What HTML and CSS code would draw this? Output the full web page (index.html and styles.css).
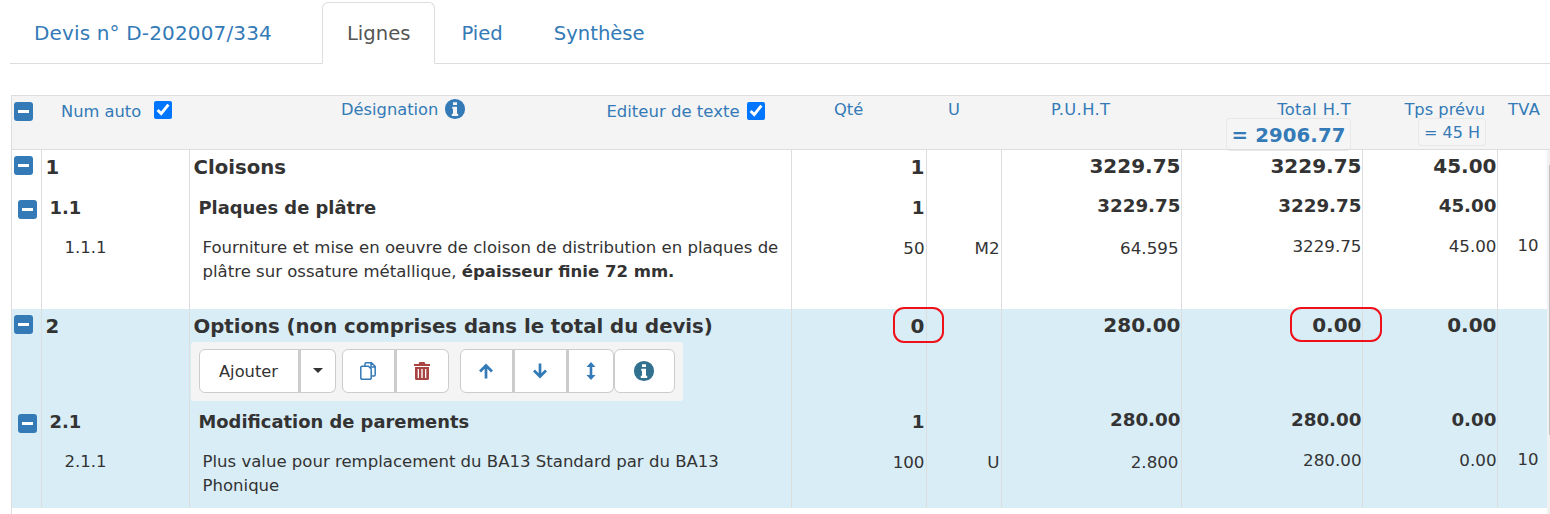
FILE: index.html
```html
<!DOCTYPE html>
<html lang="fr">
<head>
  <meta charset="UTF-8" />
  <title>Devis D-202007/334</title>
  <link rel="stylesheet" href="styles.css">
</head>
<body>
  <div class="container">
    <ul class="tabs">
      <li class="tab tab-title"><a href="#">Devis n° D-202007/334</a></li>
      <li class="tab active"><a href="#">Lignes</a></li>
      <li class="tab"><a href="#">Pied</a></li>
      <li class="tab"><a href="#">Synthèse</a></li>
    </ul>

    <div class="table-wrap">
      <table class="lines">
        <colgroup>
          <col class="c-toggle"><col class="c-num"><col class="c-des"><col class="c-qty"><col class="c-unit">
          <col class="c-pu"><col class="c-total"><col class="c-time"><col class="c-tva">
        </colgroup>
        <thead>
          <tr>
            <th colspan="2">
              <div class="head-num">
                <span class="toggle"></span>
                <label class="head-label">Num auto</label>
                <input type="checkbox" checked>
              </div>
            </th>
            <th>
              <div class="head-des">
                <span class="des-title">Désignation</span>
                <svg class="icon-info" viewBox="0 0 24 24"><use href="#info"/></svg>
                <label class="head-label editor">Editeur de texte</label>
                <input type="checkbox" checked>
              </div>
            </th>
            <th class="th-qty">Qté</th>
            <th class="th-unit">U</th>
            <th class="th-pu">P.U.H.T</th>
            <th class="th-total">Total H.T<span class="sum sum-big">= 2906.77</span></th>
            <th class="th-time">Tps prévu<span class="sum">= 45 H</span></th>
            <th class="th-tva">TVA</th>
          </tr>
        </thead>
        <tbody>
          <tr class="row-1">
            <td class="cell-toggle"><span class="toggle"></span></td>
            <td class="num">1</td>
            <td class="des">Cloisons</td>
            <td class="r qty">1</td>
            <td></td>
            <td class="r">3229.75</td>
            <td class="r">3229.75</td>
            <td class="r">45.00</td>
            <td></td>
          </tr>
          <tr class="row-2">
            <td class="cell-toggle"><span class="toggle"></span></td>
            <td class="num">1.1</td>
            <td class="des">Plaques de plâtre</td>
            <td class="r qty">1</td>
            <td></td>
            <td class="r">3229.75</td>
            <td class="r">3229.75</td>
            <td class="r">45.00</td>
            <td></td>
          </tr>
          <tr class="row-3 tall">
            <td></td>
            <td class="num">1.1.1</td>
            <td class="des">Fourniture et mise en oeuvre de cloison de distribution en plaques de plâtre sur ossature métallique, <b>épaisseur finie 72 mm.</b></td>
            <td class="r qty">50</td>
            <td class="r qty">M2</td>
            <td class="r qty pu">64.595</td>
            <td class="r">3229.75</td>
            <td class="r">45.00</td>
            <td class="tva">10</td>
          </tr>
          <tr class="row-1 info opt">
            <td class="cell-toggle"><span class="toggle"></span></td>
            <td class="num">2</td>
            <td class="des">
              Options (non comprises dans le total du devis)
              <div class="toolbar">
                <div class="btn-group">
                  <button class="btn btn-add">Ajouter</button>
                  <button class="btn btn-caret"><span class="caret"></span></button>
                </div>
                <div class="btn-group">
                  <button class="btn btn-icon"><svg viewBox="0 0 16 18"><path d="M5 4V2a1.200 1.200 0 0 1 1.200-1.200h5.300l3.700 3.700v8.300a1.200 1.200 0 0 1-1.200 1.200H11M11 1v4h4M2 4.300h6.500l2.700 2.700v9a1.200 1.200 0 0 1-1.200 1.200H2A1.200 1.200 0 0 1 .8 16V5.500A1.200 1.200 0 0 1 2 4.300z" fill="none" stroke="#337ab7" stroke-width="1.500"/></svg></button>
                  <button class="btn btn-icon btn-trash"><svg viewBox="0 0 16 18"><path fill="#a94442" d="M5.500 0h5l1 2H16v2H0V2h4.500zM1 5h14v11.500a1.500 1.500 0 0 1-1.500 1.500H2.500A1.500 1.500 0 0 1 1 16.500zm2.700 2v9h1.300V7zm3.600 0v9h1.400V7zm3.700 0v9h1.300V7z"/></svg></button>
                </div>
                <div class="btn-group gap">
                  <button class="btn btn-icon"><svg viewBox="0 0 16 16"><path fill="none" stroke="#337ab7" stroke-width="2.700" d="M8 15.500V2.500M2 8.500l6-6 6 6"/></svg></button>
                  <button class="btn btn-icon btn-trash"><svg viewBox="0 0 16 16"><path fill="none" stroke="#337ab7" stroke-width="2.700" d="M8 .5v13M2 7.500l6 6 6-6"/></svg></button>
                  <button class="btn btn-icon btn-move"><svg viewBox="0 0 10 18"><path fill="#337ab7" d="M5 0l4.500 5H6.300v8h3.200L5 18 .5 13h3.200V5H.5z"/></svg></button>
                </div>
                <button class="btn btn-help"><svg class="icon-info dark" viewBox="0 0 24 24"><use href="#info"/></svg></button>
              </div>
            </td>
            <td class="r qty mark-cell">0<span class="mark mark-qty"></span></td>
            <td></td>
            <td class="r">280.00</td>
            <td class="r mark-cell">0.00<span class="mark mark-total"></span></td>
            <td class="r">0.00</td>
            <td></td>
          </tr>
          <tr class="row-2 info">
            <td class="cell-toggle"><span class="toggle"></span></td>
            <td class="num">2.1</td>
            <td class="des">Modification de parements</td>
            <td class="r qty">1</td>
            <td></td>
            <td class="r">280.00</td>
            <td class="r">280.00</td>
            <td class="r">0.00</td>
            <td></td>
          </tr>
          <tr class="row-3 info last">
            <td></td>
            <td class="num">2.1.1</td>
            <td class="des">Plus value pour remplacement du BA13 Standard par du BA13 Phonique</td>
            <td class="r qty">100</td>
            <td class="r qty">U</td>
            <td class="r qty pu">2.800</td>
            <td class="r">280.00</td>
            <td class="r">0.00</td>
            <td class="tva">10</td>
          </tr>
        </tbody>
      </table>
    </div>
  </div>

  <div class="scroll-track"><div class="scroll-thumb"></div></div>

  <svg class="defs" width="0" height="0">
    <symbol id="info" viewBox="0 0 24 24">
      <path fill="currentColor" fill-rule="evenodd" d="M12 1a11 11 0 1 0 0 22 11 11 0 0 0 0-22zM9.800 4.500h4.400v3.200H9.800zM9 9.500h5.200v7.800h1.300v2.200h-7v-2.200h1.300v-5.600H9z"/>
    </symbol>
  </svg>
</body>
</html>
```

FILE: styles.css
```css
* { box-sizing: border-box; }
html, body {
  height: 100%;
  overflow: hidden;
}
body {
  font-family: 'DejaVu Sans', sans-serif;
  font-size: 16.3px;
  color: #333;
  background: white;
  margin: 0;
  padding: 0;
}
.container {
  padding: 2px 0 0 10px;
}
.defs {
  position: absolute;
}

/* tabs */
.tabs {
  display: flex;
  list-style: none;
  margin: 0 0 31px;
  padding: 0;
  height: 62px;
  border-bottom: 1px solid #ddd;
}
.tab {
  margin-right: 2px;
}
.tab a {
  display: block;
  height: 62px;
  padding: 19px 23.5px 0;
  font-size: 19.6px;
  line-height: 24px;
  color: #337ab7;
  text-decoration: none;
  border: 1px solid transparent;
  border-radius: 6px 6px 0 0;
}
.tab-title {
  margin-right: 25px;
}
.tab-title a {
  padding: 18px 24.5px 0 23px;
  font-size: 20px;
  letter-spacing: .15px;
}
.tab.active a {
  color: #555;
  background: white;
  border-color: #ddd #ddd white;
}

/* table */
.table-wrap {
  height: 419px;
  margin-left: 1px;
  border-left: 1px solid #ddd;
}
.lines {
  width: 1538px;
  table-layout: fixed;
  border-collapse: collapse;
}
.c-toggle { width: 29px; }
.c-num { width: 148px; }
.c-des { width: 602px; }
.c-qty { width: 135px; }
.c-unit { width: 75px; }
.c-pu { width: 180px; }
.c-total { width: 181px; }
.c-time { width: 135px; }
.c-tva { width: 53px; }

thead th {
  height: 54px;
  padding: 4px 0 0;
  background: #f4f4f4;
  border-top: 1px solid #ddd;
  border-bottom: 1px solid #ddd;
  color: #337ab7;
  font-size: 16.3px;
  font-weight: normal;
  line-height: 18px;
  text-align: left;
  vertical-align: top;
}
.head-num, .head-des {
  display: flex;
  align-items: center;
}
.head-num {
  padding: 2px 0 0 2px;
}
.head-num .head-label {
  margin-left: 28px;
}
.head-num input {
  margin: 0 0 0 13px;
  position: relative;
  top: -2px;
}
.head-des {
  padding-left: 152px;
}
.des-title {
  margin-top: -2px;
}
.head-des .icon-info {
  margin: -3px 0 0 6px;
  width: 22px;
  height: 22px;
  color: #337ab7;
}
.editor {
  margin: 3px 0 0 140px;
  font-size: 16.5px;
}
.head-des input {
  margin: 0 0 0 7px;
  position: relative;
  top: 0;
}
input[type="checkbox"] {
  width: 18px;
  height: 18px;
  flex: none;
}
.lines thead th.th-qty { padding: 5px 0 0 43px; }
.lines thead th.th-unit { padding: 5px 0 0 22px; }
.lines thead th.th-pu { padding: 5px 0 0 50px; letter-spacing: .4px; }
.lines thead th.th-total { padding: 5px 11px 0 0; text-align: right; letter-spacing: .4px; }
.lines thead th.th-time { padding: 5px 12px 0 0; text-align: right; }
.lines thead th.th-tva { padding: 5px 0 0 11px; letter-spacing: .3px; }
.sum {
  display: block;
  width: fit-content;
  margin: -1px -1px -8px auto;
  padding: 5px 5px 3px;
  background: #f5f5f5;
  border: 1px solid #e8e8e8;
  border-radius: 4px;
  font-size: 16px;
  line-height: 18px;
  letter-spacing: 0;
}
.sum-big {
  margin-right: 0;
  padding: 6px 4.5px 4px;
  font-size: 19.700px;
  font-weight: bold;
  line-height: 21px;
  letter-spacing: .1px;
}

tbody td {
  padding: 0 0 0 2px;
  border-left: 1px solid #ddd;
  border-right: 1px solid #ddd;
  vertical-align: top;
}
tbody td:first-child { border-left: 0; }
td.r { text-align: right; }
td.qty { padding-right: 1px; }
td.cell-toggle { padding: 6px 0 0 2px; }
.toggle {
  display: flex;
  align-items: center;
  justify-content: center;
  width: 19px;
  height: 19px;
  background: #337ab7;
  border-radius: 3px;
  flex: none;
}
.toggle::after {
  content: "";
  width: 11px;
  height: 3px;
  background: white;
}

.row-1 { height: 40px; font-size: 19.700px; font-weight: bold; }
.row-1 td { padding-top: 4px; line-height: 24px; }
.row-1 .r { font-size: 20px; }
.row-1 .num { padding: 6px 0 0 4px; }
.row-1 .des { padding: 6px 0 0 4px; }
.row-1 td.qty { padding-top: 5px; }
.row-1 td.cell-toggle { padding-top: 6px; }

.row-2 { height: 38px; font-size: 17.900px; font-weight: bold; }
.row-2 td { padding-top: 4px; line-height: 24px; }
.row-2 .r { font-size: 18.300px; }
.row-2 .num { padding: 6px 0 0 8px; }
.row-2 .des { padding: 6px 0 0 9px; }
.row-2 td.qty { padding-top: 6px; }
.row-2 td.cell-toggle { padding: 10px 0 0 6px; }

.row-3 { font-size: 16.550px; }
.row-3 td { padding-top: 6px; line-height: 24px; }
.row-3 .r { font-size: 16.700px; }
.row-3 .num { padding: 8px 0 0 23px; }
.row-3 .des { padding: 8px 8px 0 13px; }
.row-3 td.qty { padding-top: 8px; }
.row-3 td.pu { padding-right: 2px; }
.row-3 .tva { padding-left: 20px; }
.tall { height: 81px; }
.last { height: 66px; }

.info td { background: #d9edf7; }
.opt { height: 95px; }

/* row toolbar */
.toolbar {
  display: flex;
  width: 492px;
  height: 59px;
  margin: 3px 0 0 -3px;
  padding: 7px 8px;
  background: #f4f4f4;
  border-radius: 3px;
  font-weight: normal;
  font-size: 16.300px;
}
.btn-group {
  display: flex;
  margin-right: 6px;
}
.btn-group.gap { margin-left: 5px; margin-right: 0; }
.btn {
  height: 44px;
  margin: 0;
  padding: 0;
  display: flex;
  align-items: center;
  justify-content: center;
  background: white;
  border: 1px solid #ccc;
  font-family: inherit;
  font-size: 16.300px;
  color: #333;
}
.btn-group .btn:first-child { border-radius: 6px 0 0 6px; }
.btn-group .btn:last-child { border-radius: 0 6px 6px 0; border-left-width: 2px; }
.btn-add { width: 100px; padding-top: 2px; }
.btn-caret { width: 37px; }
.caret {
  border-top: 5px solid #333;
  border-left: 5px solid transparent;
  border-right: 5px solid transparent;
}
.btn-icon { width: 53px; }
.btn-trash { width: 54px; }
.btn-icon svg { width: 16px; height: 18px; }
.btn-move { width: 47px; }
.btn-group .btn-icon + .btn-icon { border-left-width: 2px; }
.btn-help {
  width: 61px;
  border-radius: 6px;
}
.btn-help .icon-info { width: 22px; height: 22px; }
.dark { color: #31708f; }

/* red hand-drawn marks */
.mark-cell { position: relative; }
.mark {
  position: absolute;
  border: 2px solid #f0101a;
  border-radius: 11px;
}
.mark-qty { left: 101px; top: -2px; width: 51px; height: 36px; }
.mark-total { left: 108px; top: -2px; width: 92px; height: 35px; }

/* page scrollbar on the right edge of the lines */
.scroll-track {
  position: fixed;
  top: 150px;
  right: 0;
  bottom: 0;
  width: 3px;
  background: #f1f1f1;
}
.scroll-thumb {
  height: 270px;
  margin: 15px 0 0 2px;
  background: #c1c1c1;
}
```
